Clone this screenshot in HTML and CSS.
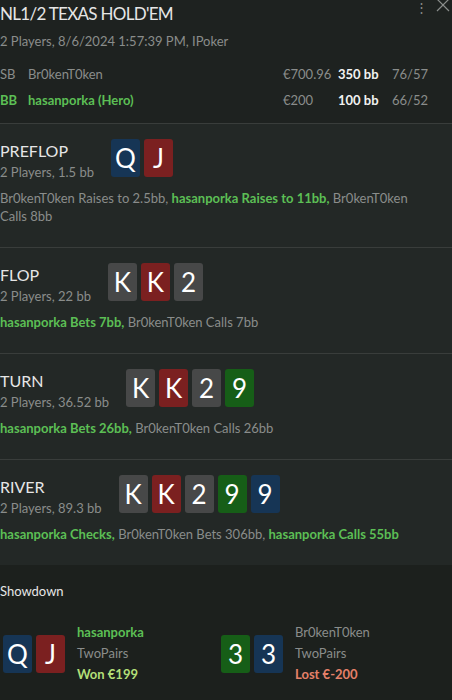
FILE: index.html
```html
<!DOCTYPE html>
<html>
<head>
<meta charset="utf-8">
<link rel="stylesheet" href="styles.css">
</head>
<body>
<div class="app">
  <header class="head">
    <div class="win-btns">
      <span class="dots">⋮</span>
      <svg class="close" width="14" height="14" viewBox="0 0 14 14"><path d="M1 1 L13 13 M13 1 L1 13" stroke="#8a8d8b" stroke-width="1.2" fill="none"/></svg>
    </div>
    <div class="title">NL1/2 TEXAS HOLD'EM</div>
    <div class="sub">2 Players, 8/6/2024 1:57:39 PM, IPoker</div>
    <div class="players">
      <div class="prow">
        <span>SB</span><span>Br0kenT0ken</span><span>€700.96</span><span class="bb">350 bb</span><span>76/57</span>
      </div>
      <div class="prow hero">
        <span>BB</span><span>hasanporka (Hero)</span><span class="plain">€200</span><span class="bb">100 bb</span><span class="plain">66/52</span>
      </div>
    </div>
  </header>

  <section class="street">
    <div class="street-head">
      <div class="street-info">
        <div class="street-name">PREFLOP</div>
        <div class="street-sub">2 Players, 1.5 bb</div>
      </div>
      <div class="cards">
        <span class="card blue">Q</span><span class="card red">J</span>
      </div>
    </div>
    <div class="actions">Br0kenT0ken Raises to 2.5bb, <span class="me">hasanporka Raises to 11bb,</span> Br0kenT0ken Calls 8bb</div>
  </section>

  <section class="street">
    <div class="street-head">
      <div class="street-info">
        <div class="street-name">FLOP</div>
        <div class="street-sub">2 Players, 22 bb</div>
      </div>
      <div class="cards">
        <span class="card gray">K</span><span class="card red">K</span><span class="card gray">2</span>
      </div>
    </div>
    <div class="actions"><span class="me">hasanporka Bets 7bb,</span> Br0kenT0ken Calls 7bb</div>
  </section>

  <section class="street">
    <div class="street-head">
      <div class="street-info">
        <div class="street-name">TURN</div>
        <div class="street-sub">2 Players, 36.52 bb</div>
      </div>
      <div class="cards">
        <span class="card gray">K</span><span class="card red">K</span><span class="card gray">2</span><span class="card green">9</span>
      </div>
    </div>
    <div class="actions"><span class="me">hasanporka Bets 26bb,</span> Br0kenT0ken Calls 26bb</div>
  </section>

  <section class="street">
    <div class="street-head">
      <div class="street-info">
        <div class="street-name">RIVER</div>
        <div class="street-sub">2 Players, 89.3 bb</div>
      </div>
      <div class="cards">
        <span class="card gray">K</span><span class="card red">K</span><span class="card gray">2</span><span class="card green">9</span><span class="card blue">9</span>
      </div>
    </div>
    <div class="actions"><span class="me">hasanporka Checks,</span> Br0kenT0ken Bets 306bb, <span class="me">hasanporka Calls 55bb</span></div>
  </section>

  <section class="showdown">
    <div class="sd-title">Showdown</div>
    <div class="sd-grid">
      <div class="sd-player">
        <div class="cards">
          <span class="card blue">Q</span><span class="card red">J</span>
        </div>
        <div class="sd-info">
          <div class="sd-name me">hasanporka</div>
          <div class="sd-hand">TwoPairs</div>
          <div class="won">Won €199</div>
        </div>
      </div>
      <div class="sd-player">
        <div class="cards">
          <span class="card green">3</span><span class="card blue">3</span>
        </div>
        <div class="sd-info">
          <div class="sd-name">Br0kenT0ken</div>
          <div class="sd-hand">TwoPairs</div>
          <div class="lost">Lost €-200</div>
        </div>
      </div>
    </div>
  </section>
</div>
</body>
</html>
```

FILE: styles.css
```css
* { box-sizing: border-box; }
html, body {
  margin: 0;
  padding: 0;
  background: #1c201d;
  height: 700px;
  overflow: hidden;
}
body {
  font-family: "Lato", "Noto Sans", sans-serif;
  color: #8a8d8b;
  font-size: 13px;
}
.app {
  width: 452px;
  display: flex;
  flex-direction: column;
}
.head {
  position: relative;
  background: #1e2220;
  padding: 0 0 10px 0;
}
.win-btns {
  position: absolute;
  top: 0;
  right: 2px;
  display: flex;
  align-items: flex-start;
  gap: 8px;
}
.dots {
  color: #8a8d8b;
  font-size: 13px;
  line-height: 14px;
}
.close { display: block; margin-top: -2px; }
.title {
  color: #e6e6e6;
  font-size: 17px;
  letter-spacing: -0.7px;
  line-height: 28px;
}
.sub {
  font-size: 13px;
  line-height: 22px;
  margin-top: 2px;
}
.players {
  margin-top: 9px;
}
.prow {
  display: grid;
  grid-template-columns: 28px 255px 55px 54px 40px;
  height: 26px;
  align-items: center;
  font-size: 13px;
}
.prow .bb { color: #f2f2f2; font-weight: 700; }
.prow.hero { color: #5cbf55; font-weight: 700; }
.prow.hero .plain { color: #8a8d8b; font-weight: 400; }

.street {
  background: #232826;
  border-top: 1px solid #393d3b;
  padding: 15px 0 22px 0;
}
.street-head {
  display: flex;
  align-items: flex-start;
  gap: 17px;
}
.street-info { padding-top: 1px; }
.street-name {
  color: #e6e6e6;
  font-size: 16px;
  line-height: 22px;
}
.street-sub {
  font-size: 13px;
  line-height: 20px;
}
.cards {
  display: flex;
  gap: 4px;
}
.card {
  width: 29px;
  height: 38px;
  border-radius: 3px;
  color: #fff;
  font-size: 26px;
  line-height: 38px;
  text-align: center;
}
.card.blue { background: #163555; }
.card.red { background: #7b2020; }
.card.gray { background: #474848; }
.card.green { background: #165e17; }
.actions {
  margin-top: 7px;
  font-size: 13px;
  line-height: 18px;
  max-width: 420px;
}
.me { color: #5cbf55; font-weight: 700; }

.showdown {
  background: #1c201d;
  padding: 16px 0 0 0;
}
.sd-title {
  color: #e6e6e6;
  font-size: 13px;
  line-height: 20px;
}
.sd-grid {
  display: grid;
  grid-template-columns: 218px 218px;
  padding-left: 3px;
  margin-top: 21px;
}
.sd-player {
  display: flex;
  align-items: center;
  gap: 12px;
}
.sd-info {
  font-size: 13px;
  line-height: 21px;
}
.won { color: #b3df78; font-weight: 700; }
.lost { color: #e58069; font-weight: 700; }
```
